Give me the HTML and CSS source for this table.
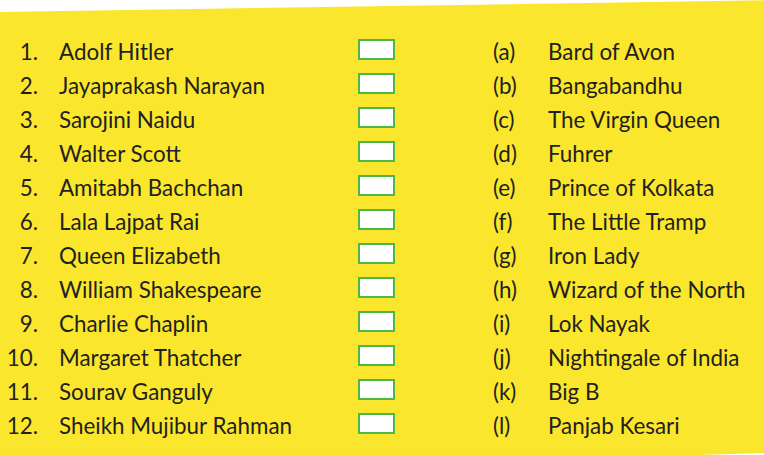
FILE: index.html
```html
<!DOCTYPE html>
<html>
<head>
<meta charset="utf-8">
<link rel="stylesheet" href="styles.css">
</head>
<body>
<div class="sheet">
  <div class="table">
    <div class="row"><span class="num">1.</span><span class="name">Adolf Hitler</span><span class="box"></span><span class="let">(a)</span><span class="mean">Bard of Avon</span></div>
    <div class="row"><span class="num">2.</span><span class="name">Jayaprakash Narayan</span><span class="box"></span><span class="let">(b)</span><span class="mean">Bangabandhu</span></div>
    <div class="row"><span class="num">3.</span><span class="name">Sarojini Naidu</span><span class="box"></span><span class="let">(c)</span><span class="mean">The Virgin Queen</span></div>
    <div class="row"><span class="num">4.</span><span class="name">Walter Scott</span><span class="box"></span><span class="let">(d)</span><span class="mean">Fuhrer</span></div>
    <div class="row"><span class="num">5.</span><span class="name">Amitabh Bachchan</span><span class="box"></span><span class="let">(e)</span><span class="mean">Prince of Kolkata</span></div>
    <div class="row"><span class="num">6.</span><span class="name">Lala Lajpat Rai</span><span class="box"></span><span class="let">(f)</span><span class="mean">The Little Tramp</span></div>
    <div class="row"><span class="num">7.</span><span class="name">Queen Elizabeth</span><span class="box"></span><span class="let">(g)</span><span class="mean">Iron Lady</span></div>
    <div class="row"><span class="num">8.</span><span class="name">William Shakespeare</span><span class="box"></span><span class="let">(h)</span><span class="mean">Wizard of the North</span></div>
    <div class="row"><span class="num">9.</span><span class="name">Charlie Chaplin</span><span class="box"></span><span class="let">(i)</span><span class="mean">Lok Nayak</span></div>
    <div class="row"><span class="num">10.</span><span class="name">Margaret Thatcher</span><span class="box"></span><span class="let">(j)</span><span class="mean">Nightingale of India</span></div>
    <div class="row"><span class="num">11.</span><span class="name">Sourav Ganguly</span><span class="box"></span><span class="let">(k)</span><span class="mean">Big B</span></div>
    <div class="row"><span class="num">12.</span><span class="name">Sheikh Mujibur Rahman</span><span class="box"></span><span class="let">(l)</span><span class="mean">Panjab Kesari</span></div>
  </div>
</div>
</body>
</html>
```
FILE: styles.css
```css
html, body {
  margin: 0;
  padding: 0;
  background: #ffffff;
}
.sheet {
  width: 764px;
  height: 455px;
  background: #fae62c;
  clip-path: polygon(0 12px, 780px 0, 764px 453px, 700px 455px, 0 455px);
  padding-top: 34px;
  box-sizing: border-box;
  font-family: "Lato", "Liberation Sans", sans-serif;
  font-size: 22.4px;
  color: #231f20;
}
.table {
  display: flex;
  flex-direction: column;
}
.row {
  display: grid;
  grid-template-columns: 38px 320px 36px 154px 1fr;
  align-items: center;
  height: 34px;
  white-space: nowrap;
}
.num {
  text-align: right;
}
.name {
  padding-left: 21px;
}
.box {
  width: 37px;
  height: 21px;
  box-sizing: border-box;
  border: 2px solid #4db848;
  background: #ffffff;
  margin-top: -4px;
}
.let {
  padding-left: 99px;
}
```
